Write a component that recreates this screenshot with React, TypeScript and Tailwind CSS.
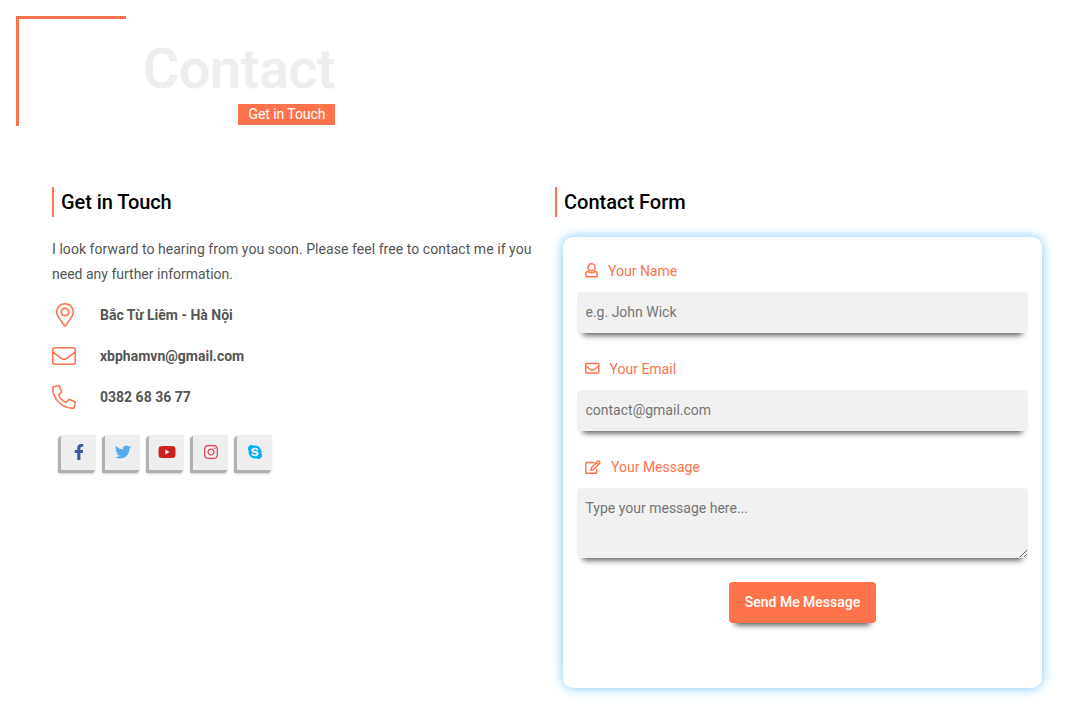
import type { ReactNode } from "react";
import { FaFacebookF, FaTwitter, FaYoutube, FaInstagram, FaSkype } from "react-icons/fa";

function Pin() {
  return (
    <svg viewBox="0 0 384 512" className="h-6 w-[18px]" fill="currentColor" stroke="currentColor" strokeWidth="3">
      <path d="M192 96c-52.935 0-96 43.065-96 96s43.065 96 96 96 96-43.065 96-96-43.065-96-96-96zm0 160c-35.29 0-64-28.71-64-64s28.71-64 64-64 64 28.71 64 64-28.71 64-64 64zm0-256C85.961 0 0 85.961 0 192c0 77.413 26.97 99.031 172.268 309.67 9.534 13.772 29.929 13.774 39.465 0C357.03 291.031 384 269.413 384 192 384 85.961 298.039 0 192 0zm0 473.931C52.705 272.488 32 256.494 32 192c0-42.738 16.643-82.917 46.863-113.137S149.262 32 192 32s82.917 16.643 113.137 46.863S352 149.262 352 192c0 64.49-20.692 80.47-160 281.931z" />
    </svg>
  );
}

function Mail({ className, weight }: { className: string; weight: number }) {
  const i = weight / 2;
  return (
    <svg viewBox="0 0 512 512" className={className} fill="none" stroke="currentColor" strokeWidth={weight}>
      <rect x={i} y={64 + i} width={512 - weight} height={384 - weight} rx={48 - i} />
      <path d="M16 168c30 25 70 56 150 114 24 18 56 46 90 46s66-28 90-46c80-58 120-89 150-114" />
    </svg>
  );
}

function Phone() {
  return (
    <svg viewBox="0 0 512 512" className="size-6" fill="none" stroke="currentColor" strokeWidth="36">
      <path
        transform="translate(16 16) scale(.9375)"
        d="M497.39 361.8l-112-48a24 24 0 0 0-28 6.9l-49.6 60.6A370.66 370.66 0 0 1 130.6 204.11l60.6-49.6a23.94 23.94 0 0 0 6.9-28l-48-112A24.16 24.16 0 0 0 122.6.61l-104 24A24 24 0 0 0 0 48c0 256.5 207.9 464 464 464a24 24 0 0 0 23.4-18.6l24-104a24.29 24.29 0 0 0-14.01-27.6z"
      />
    </svg>
  );
}

function Person() {
  return (
    <svg viewBox="0 0 448 512" className="h-[14.5px] w-[13px]" fill="none" stroke="currentColor" strokeWidth="54">
      <circle cx="224" cy="152" r="125" />
      <path d="M124 286C60 300 24 340 24 400v48c0 22 18 38 40 38h320c22 0 40-16 40-38v-48c0-60-36-100-100-114M112 310c30 40 194 40 224 0" />
    </svg>
  );
}

function Edit() {
  return (
    <svg viewBox="0 0 576 512" className="h-3.5 w-4 overflow-visible" fill="none" stroke="currentColor" strokeWidth="54">
      <path d="M340 88H48c-13 0-24 11-24 24v352c0 13 11 24 24 24h352c13 0 24-11 24-24V320" />
      <path d="M225 285L457 48c15-15 39-15 54 0l18 18c15 15 15 39 0 54L297 357l-86 14zM408 97l72 72" />
    </svg>
  );
}

function Heading({ children }: { children: ReactNode }) {
  return (
    <h2 className="h-[30px] border-l-2 border-[#ff734c] pl-[7px] text-xl leading-[30px] font-medium text-black">
      {children}
    </h2>
  );
}

function ContactRow({ icon, children }: { icon: ReactNode; children: ReactNode }) {
  return (
    <div className="flex h-[41px] items-center font-bold">
      <span className="flex w-12 shrink-0 text-[#ff734c]">{icon}</span>
      {children}
    </div>
  );
}

function Social({ children, label }: { children: ReactNode; label: string }) {
  return (
    <a
      href="#"
      aria-label={label}
      className="flex size-[35px] items-center justify-center bg-[#eee] pb-px text-base shadow-[-1px_1px_0_#b0b0b0,-2px_2px_0_#b0b0b0,-3px_3px_0_#b0b0b0,-2px_3px_3px_rgba(0,0,0,0.35)]"
    >
      {children}
    </a>
  );
}

const field =
  "block w-full rounded bg-[#f1f1f1] pr-[9px] pl-[8.5px] text-sm text-[#555] shadow-[0_8px_6px_-6px_rgba(0,0,0,0.7)] outline-none placeholder:text-[#757575]";

function Label({ icon, children, htmlFor }: { icon: ReactNode; children: ReactNode; htmlFor: string }) {
  return (
    <label htmlFor={htmlFor} className="flex h-[41px] items-center gap-[10px] pb-0.5 pl-2 text-[#ff734c]">
      {icon}
      <span>{children}</span>
    </label>
  );
}

export default function App() {
  return (
    <main className="h-[726px] overflow-hidden bg-white pt-4 pl-4 font-['Roboto',sans-serif] text-sm text-[#555]">
      <header className="flex h-[110px]">
        <div className="size-[110px] border-t-3 border-l-3 border-[#ff734c]" />
        <div className="flex w-[209px] flex-col items-end pt-[19px]">
          <h1 className="text-[56px] leading-[69px] font-[560] tracking-[-0.6px] text-[#eee]">Contact</h1>
          <span className="h-[21px] w-[97px] bg-[#ff734c] pl-[10.5px] leading-[21px] tracking-[-0.08px] text-white">
            Get in Touch
          </span>
        </div>
      </header>
      <div className="flex pt-[61px] pl-9">
        <section className="w-[503px]">
          <Heading>
            <span className="tracking-[-0.08px]">Get in Touch</span>
          </Heading>
          <p className="mt-5 mb-[15px] w-[485px] leading-[25px]">
            <span className="tracking-[0.055px]">
              I look forward to hearing from you soon. Please feel free to contact me if you
            </span>{" "}
            need any further information.
          </p>
          <div className="-mt-2">
            <ContactRow icon={<span className="pl-[3.5px]"><Pin /></span>}>Bắc Từ Liêm - Hà Nội</ContactRow>
            <ContactRow icon={<Mail className="size-6" weight={34} />}>xbphamvn@gmail.com</ContactRow>
            <ContactRow icon={<Phone />}>0382 68 36 77</ContactRow>
          </div>
          <div className="mt-[18px] ml-[9px] flex gap-[9px]">
            <Social label="Facebook"><FaFacebookF className="text-[#3b5998]" /></Social>
            <Social label="Twitter"><FaTwitter className="text-[#55acee]" /></Social>
            <Social label="YouTube"><FaYoutube className="h-[18px] w-[18px] text-[#cd201f]" /></Social>
            <Social label="Instagram"><FaInstagram className="text-[#e4405f]" /></Social>
            <Social label="Skype"><FaSkype className="text-[#00aff0]" /></Social>
          </div>
        </section>
        <section className="w-[487px]">
          <Heading>Contact Form</Heading>
          <form className="mt-5 ml-2 h-[451px] rounded-[10px] px-3.5 pt-3.5 shadow-[0_0_12px_#7cc4fc]">
            <Label htmlFor="name" icon={<Person />}>Your Name</Label>
            <input id="name" placeholder="e.g. John Wick" className={`${field} h-[41px] pb-0.5`} />
            <div className="h-4" />
            <Label htmlFor="email" icon={<Mail className="size-[14.5px]" weight={52} />}>Your Email</Label>
            <input id="email" placeholder="contact@gmail.com" className={`${field} h-[41px] pb-0.5`} />
            <div className="h-4" />
            <Label htmlFor="message" icon={<Edit />}>Your Message</Label>
            <textarea id="message" placeholder="Type your message here..." className={`${field} h-[70px] resize py-2.5 leading-5`} />
            <button type="button" className="mx-auto mt-6 block h-[41px] w-[147px] rounded bg-[#ff734c] pb-0.5 font-medium text-white shadow-[0_8px_6px_-6px_rgba(0,0,0,0.7)]">
              Send Me Message
            </button>
          </form>
        </section>
      </div>
    </main>
  );
}
